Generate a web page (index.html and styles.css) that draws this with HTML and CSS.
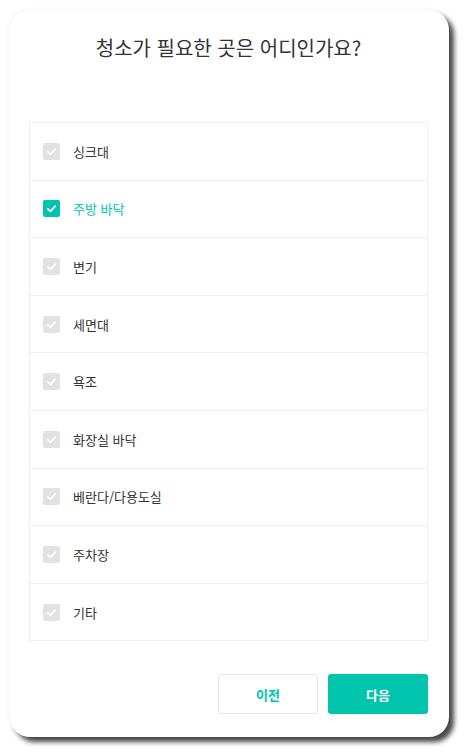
FILE: index.html
```html
<!DOCTYPE html>
<html lang="ko">
<head>
    <meta charset="UTF-8">
    <meta name="viewport" content="width=device-width, initial-scale=1.0">
    <title>청소 장소 선택</title>
    <link rel="stylesheet" href="styles.css">
</head>
<body>
    <div class="card">
        <h1 class="title">청소가 필요한 곳은 어디인가요?</h1>
        <ul class="options">
            <li class="option"><span class="box"><svg viewBox="0 0 16 16"><polyline points="4.5,8.3 7,10.6 11.5,5.8"/></svg></span>싱크대</li>
            <li class="option checked"><span class="box"><svg viewBox="0 0 16 16"><polyline points="4.5,8.3 7,10.6 11.5,5.8"/></svg></span>주방 바닥</li>
            <li class="option"><span class="box"><svg viewBox="0 0 16 16"><polyline points="4.5,8.3 7,10.6 11.5,5.8"/></svg></span>변기</li>
            <li class="option"><span class="box"><svg viewBox="0 0 16 16"><polyline points="4.5,8.3 7,10.6 11.5,5.8"/></svg></span>세면대</li>
            <li class="option"><span class="box"><svg viewBox="0 0 16 16"><polyline points="4.5,8.3 7,10.6 11.5,5.8"/></svg></span>욕조</li>
            <li class="option"><span class="box"><svg viewBox="0 0 16 16"><polyline points="4.5,8.3 7,10.6 11.5,5.8"/></svg></span>화장실 바닥</li>
            <li class="option"><span class="box"><svg viewBox="0 0 16 16"><polyline points="4.5,8.3 7,10.6 11.5,5.8"/></svg></span>베란다/다용도실</li>
            <li class="option"><span class="box"><svg viewBox="0 0 16 16"><polyline points="4.5,8.3 7,10.6 11.5,5.8"/></svg></span>주차장</li>
            <li class="option"><span class="box"><svg viewBox="0 0 16 16"><polyline points="4.5,8.3 7,10.6 11.5,5.8"/></svg></span>기타</li>
        </ul>
        <div class="actions">
            <button class="btn prev">이전</button>
            <button class="btn next">다음</button>
        </div>
    </div>
</body>
</html>
```

FILE: styles.css
```css
body {
    margin: 0;
    padding: 10px;
    min-height: 755px;
    box-sizing: border-box;
    background-color: #ffffff;
    font-family: "Noto Sans CJK KR", "Noto Sans", sans-serif;
    color: #333333;
}
.card {
    width: 439px;
    height: 727px;
    box-sizing: border-box;
    padding: 24px 21px 0 19px;
    border-radius: 20px;
    background-color: #ffffff;
    box-shadow: 5px 5px 5px rgba(0, 0, 0, 0.72), 0 0 6px rgba(0, 0, 0, 0.06);
}
.title {
    margin: 0;
    font-size: 20px;
    font-weight: 400;
    line-height: 28px;
    text-align: center;
    color: #333333;
}
.options {
    list-style: none;
    margin: 60px 0 0 0;
    padding: 0;
    border: 1px solid #f0f0f0;
}
.option {
    display: flex;
    align-items: center;
    height: 56.6px;
    padding-left: 13px;
    border-bottom: 1px solid #f0f0f0;
    font-size: 13px;
    color: #333333;
}
.option:last-child {
    border-bottom: none;
}
.box {
    display: flex;
    width: 17px;
    height: 17px;
    margin-right: 13px;
    border-radius: 2px;
    background-color: #e2e2e2;
}
.box svg {
    width: 17px;
    height: 17px;
    fill: none;
    stroke: #ffffff;
    stroke-width: 1.7;
    stroke-linecap: round;
    stroke-linejoin: round;
}
.checked {
    color: #00c5ac;
}
.checked .box {
    background-color: #00c5ac;
}
.actions {
    display: flex;
    justify-content: flex-end;
    gap: 10px;
    margin-top: 33px;
}
.btn {
    width: 100px;
    height: 40px;
    border-radius: 3px;
    font-family: "Noto Sans CJK KR", "Noto Sans", sans-serif;
    font-size: 13px;
    font-weight: 700;
    cursor: pointer;
}
.prev {
    background-color: #ffffff;
    border: 1px solid #e6e6e6;
    color: #00c5ac;
}
.next {
    background-color: #00c5ac;
    border: none;
    color: #ffffff;
}
```
